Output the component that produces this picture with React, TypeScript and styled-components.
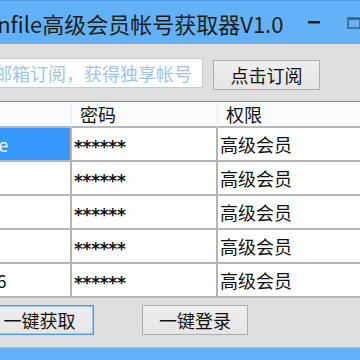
import styled, { createGlobalStyle } from "styled-components";

const GlobalStyle = createGlobalStyle`
  html, body {
    margin: 0;
    padding: 0;
    overflow: hidden;
    background: #dfdfdf;
  }
  * {
    box-sizing: border-box;
  }
`;

const Window = styled.div`
  width: 480px;
  height: 360px;
  margin-left: -60px;
  display: flex;
  flex-direction: column;
  background: #dfdfdf;
  font-family: "Noto Sans CJK SC", "Noto Sans", sans-serif;
  color: #111;
`;

const TitleBar = styled.div`
  height: 44px;
  flex: none;
  display: flex;
  align-items: center;
  background: #63b2f7;
  border-top: 1px solid #4d9fe8;
  padding-left: 33px;
`;

const Title = styled.div`
  flex: 1;
  font-size: 22px;
  color: #1c1c1c;
  white-space: nowrap;
`;

const Controls = styled.div`
  display: flex;
  align-self: stretch;
  padding-right: 6px;
`;

const CaptionButton = styled.div`
  width: 40px;
  display: flex;
  align-items: center;
  justify-content: center;
`;

const Toolbar = styled.div`
  display: flex;
  align-items: flex-start;
  gap: 10px;
  height: 32px;
  margin-top: 14px;
  padding-left: 14px;
`;

const Input = styled.input`
  width: 249px;
  height: 30px;
  border: 1px solid #c9c9c9;
  background: #fff;
  padding: 0 3px;
  font-family: inherit;
  font-size: 18px;
  outline: none;

  &::placeholder {
    color: #a3c3e4;
  }
`;

const Button = styled.button<{ $focused?: boolean; $width: number }>`
  width: ${(p) => p.$width}px;
  height: 30px;
  flex: none;
  border: 1px solid ${(p) => (p.$focused ? "#4d9be6" : "#adadad")};
  box-shadow: ${(p) => (p.$focused ? "inset 0 0 0 1px #9fc8f0" : "none")};
  background: linear-gradient(#efefef, #e5e5e5);
  font-family: inherit;
  font-size: 18px;
  color: #111;
  padding: 0;
`;

const SubscribeButton = styled(Button)`
  margin-top: 2px;
`;

const Table = styled.div`
  margin: 11px 0 0 10px;
  display: grid;
  grid-template-columns: 122px 146px 1fr;
  background: #fff;
  border-top: 1px solid #8c8c8c;
`;

const HeadCell = styled.div`
  height: 26px;
  padding-left: 8px;
  display: flex;
  align-items: center;
  font-size: 18px;
  background: #f9fbfd;
  border-right: 1px solid #e3e9f1;
  border-bottom: 2px solid #b8b8b8;
`;

const Cell = styled.div<{ $selected?: boolean }>`
  height: 34px;
  padding-left: 2px;
  display: flex;
  align-items: center;
  font-size: 18px;
  white-space: nowrap;
  overflow: hidden;
  background: ${(p) => (p.$selected ? "#3399ff" : "#fff")};
  color: ${(p) => (p.$selected ? "#fff" : "#111")};
  border-right: 2px solid #b4b4b4;
  border-bottom: 2px solid #b4b4b4;
`;

const Stars = styled.span`
  font-family: "DejaVu Sans", sans-serif;
  font-size: 17px;
  font-weight: bold;
  letter-spacing: -0.3px;
  transform: translateY(3px);
`;

const Actions = styled.div`
  display: flex;
  gap: 48px;
  margin-top: 7px;
  padding-left: 45px;
`;

const StatusBar = styled.div`
  flex: 1;
  margin-top: 12px;
  background: #63b2f7;
  border-top: 1px solid #8cc3f0;
`;

const accounts = [
  { user: "jinlove", level: "高级会员" },
  { user: "abc1", level: "高级会员" },
  { user: "yf88", level: "高级会员" },
  { user: "vip2", level: "高级会员" },
  { user: "ly1016", level: "高级会员" },
];

const App = () => {
  return (
    <Window>
      <GlobalStyle />
      <TitleBar>
        <Title>Yunfile高级会员帐号获取器V1.0</Title>
        <Controls>
          <CaptionButton>
            <svg width="12" height="3" viewBox="0 0 12 3">
              <rect width="12" height="2.5" fill="#1e1e1e" />
            </svg>
          </CaptionButton>
          <CaptionButton>
            <svg width="14" height="12" viewBox="0 0 14 12">
              <rect x="1" y="1" width="12" height="10" fill="none" stroke="#3a6591" strokeWidth="1.6" />
              <rect x="1" y="1" width="12" height="2" fill="#3a6591" />
            </svg>
          </CaptionButton>
          <CaptionButton />
        </Controls>
      </TitleBar>

      <Toolbar>
        <Input placeholder="输入邮箱订阅，获得独享帐号" />
        <SubscribeButton $width={107}>点击订阅</SubscribeButton>
      </Toolbar>

      <Table>
        <HeadCell>帐号</HeadCell>
        <HeadCell>密码</HeadCell>
        <HeadCell>权限</HeadCell>
        {accounts.map((a, i) => [
          <Cell key={`u${i}`} $selected={i === 0}>
            {a.user}
          </Cell>,
          <Cell key={`p${i}`}>
            <Stars>******</Stars>
          </Cell>,
          <Cell key={`l${i}`}>{a.level}</Cell>,
        ])}
      </Table>

      <Actions>
        <Button $focused $width={109}>
          一键获取
        </Button>
        <Button $width={106}>一键登录</Button>
      </Actions>

      <StatusBar />
    </Window>
  );
};

export default App;
